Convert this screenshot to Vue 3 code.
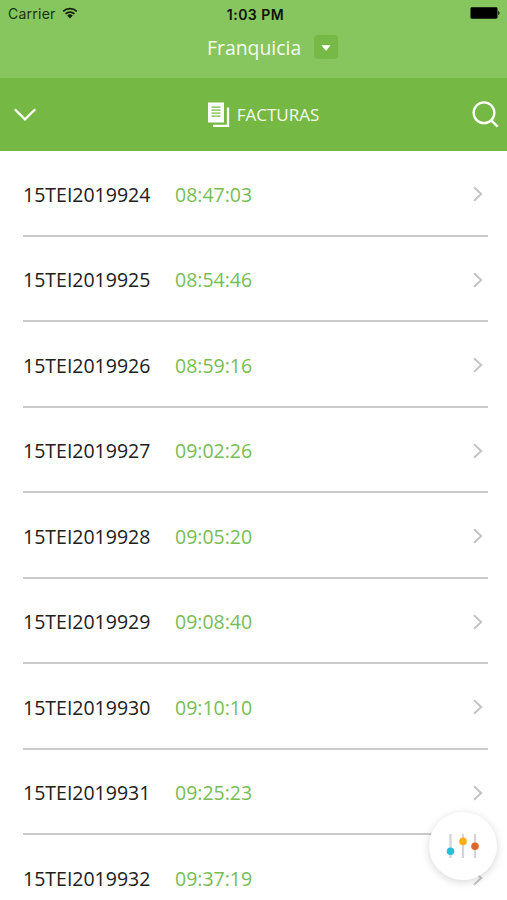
<script setup>
const invoices = [
  { id: '15TEI2019924', time: '08:47:03' },
  { id: '15TEI2019925', time: '08:54:46' },
  { id: '15TEI2019926', time: '08:59:16' },
  { id: '15TEI2019927', time: '09:02:26' },
  { id: '15TEI2019928', time: '09:05:20' },
  { id: '15TEI2019929', time: '09:08:40' },
  { id: '15TEI2019930', time: '09:10:10' },
  { id: '15TEI2019931', time: '09:25:23' },
  { id: '15TEI2019932', time: '09:37:19' },
]
</script>

<template>
  <div class="screen">
    <header class="top">
      <div class="status">
        <div class="carrier">
          <span>Carrier</span>
          <svg class="wifi" width="16" height="12" viewBox="0 0 16 12">
            <path d="M1.2 4.4a9.8 9.8 0 0 1 13.6 0M3.6 6.9a6.4 6.4 0 0 1 8.8 0" fill="none" stroke="#14200c" stroke-width="1.8" />
            <path d="M5.2 8.6a4.1 4.1 0 0 1 5.6 0L8 11.5z" fill="#14200c" />
          </svg>
        </div>
        <span class="clock">1:03 PM</span>
        <svg class="battery" width="31" height="12" viewBox="0 0 31 12">
          <rect x="1.5" y="0.3" width="27" height="11.4" rx="1.4" />
          <path d="M29.3 4c1.6.3 1.6 3.7 0 4z" />
        </svg>
      </div>
      <div class="company">
        <span class="company-name">Franquicia</span>
        <span class="dropdown">
          <svg width="24" height="24" viewBox="0 0 24 24">
            <path d="M8 10.5h8l-4 5z" fill="#fff" stroke="#fff" stroke-width=".6" stroke-linejoin="round" />
          </svg>
        </span>
      </div>
    </header>

    <nav class="bar">
      <svg class="down" width="24" height="16" viewBox="0 0 24 16">
        <path d="M1.8 2.3L12 12.3L22.2 2.3" fill="none" stroke="#fff" stroke-width="2.3" />
      </svg>
      <div class="title">
        <svg width="22" height="26" viewBox="0 0 22 26">
          <path d="M0 .5h16v20H0z" fill="#fff" />
          <path d="M3.5 5.2h9M3.5 8.2h9M3.5 11.2h9M3.5 14.2h9" stroke="#79b94a" stroke-width="1.2" />
          <path d="M20 5.5v18.4H5" fill="none" stroke="#fff" stroke-width="2.3" />
        </svg>
        <span class="title-text">FACTURAS</span>
      </div>
      <svg class="search" width="28" height="28" viewBox="0 0 28 28">
        <circle cx="13" cy="11.8" r="10.4" fill="none" stroke="#fff" stroke-width="2.3" />
        <path d="M19.8 18.8L26.6 25.6" stroke="#fff" stroke-width="2.5" />
      </svg>
    </nav>

    <main class="list">
      <div v-for="item in invoices" :key="item.id" class="row">
        <span class="number">{{ item.id }}</span>
        <span class="time">{{ item.time }}</span>
        <svg class="chevron" width="12" height="18" viewBox="0 0 12 18">
          <path d="M2 2.2L9.2 9L2 15.8" fill="none" stroke="#c4c4c4" stroke-width="2" />
        </svg>
      </div>
    </main>

    <div class="filter">
      <svg width="36" height="28" viewBox="0 0 36 28">
        <path d="M5.5 2v24M18 2v24M30 2v24" stroke="#d3d3d8" stroke-width="2.2" />
        <circle cx="5.5" cy="19.2" r="3.8" fill="#2bbcd8" />
        <circle cx="18" cy="9.4" r="3.8" fill="#fbae1c" />
        <circle cx="30" cy="14.3" r="3.8" fill="#e0672b" />
      </svg>
    </div>
  </div>
</template>

<style>
body {
  margin: 0;
  overflow: hidden;
}
</style>

<style scoped>
.screen {
  position: relative;
  width: 507px;
  height: 900px;
  overflow: hidden;
  background: #fff;
  font-family: "Open Sans", "Noto Sans", sans-serif;
}
svg {
  display: block;
  flex: none;
}
.top {
  height: 78px;
  background: #87c55f;
}
.status {
  display: grid;
  grid-template-columns: 1fr auto 1fr;
  align-items: center;
  height: 28px;
  padding: 0 7px 0 8px;
  box-sizing: border-box;
  font-family: Inter, sans-serif;
}
.carrier {
  display: flex;
  align-items: center;
  gap: 6px;
  font-size: 14px;
  letter-spacing: 0.25px;
  margin-top: -1px;
  color: #1d3010;
}
.wifi {
  margin-top: -2px;
}
.clock {
  font-size: 14px;
  letter-spacing: 0.5px;
  font-weight: 600;
  color: #0b1405;
  margin-left: 3px;
}
.battery {
  justify-self: end;
  margin-top: -2px;
}
.company {
  display: flex;
  align-items: center;
  height: 24px;
  margin-top: 7px;
  padding-left: 207px;
}
.company-name {
  width: 107px;
  font-size: 19.4px;
  line-height: 24px;
  padding-top: 1px;
  color: #f5fbef;
}
.dropdown {
  width: 24px;
  height: 24px;
  border-radius: 4px;
  background: #76b947;
}
.bar {
  display: grid;
  grid-template-columns: 1fr auto 1fr;
  align-items: center;
  height: 73px;
  padding: 0 8px 0 13px;
  box-sizing: border-box;
  background: #75b844;
}
.title {
  display: flex;
  align-items: center;
  gap: 7px;
  margin-left: 15px;
}
.title-text {
  font-size: 17px;
  color: #f5fbef;
}
.search {
  justify-self: end;
}
.list {
  padding: 0 19px 0 23px;
}
.row {
  display: flex;
  align-items: center;
  height: 85.5px;
  padding-top: 3px;
  box-sizing: border-box;
  border-bottom: 2px solid #cbcbcb;
  font-size: 19.5px;
}
.number {
  width: 152px;
  color: #202020;
}
.time {
  color: #77bd55;
}
.chevron {
  margin-left: auto;
  margin-right: 4px;
}
.filter {
  position: absolute;
  left: 429px;
  top: 812px;
  display: flex;
  align-items: center;
  justify-content: center;
  width: 68px;
  height: 68px;
  border-radius: 50%;
  background: #fff;
  box-shadow: 0 2px 9px rgba(0, 0, 0, 0.16);
}
</style>
